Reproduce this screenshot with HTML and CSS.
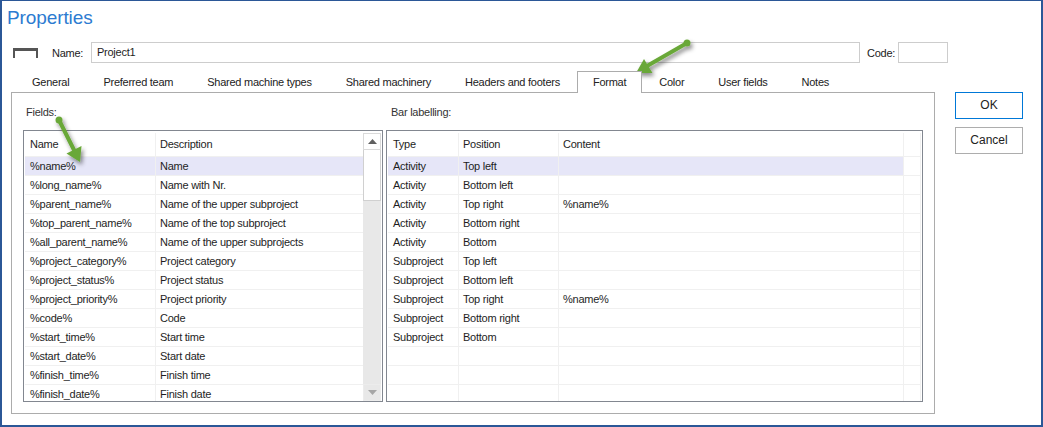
FILE: index.html
```html
<!DOCTYPE html>
<html>
<head>
<meta charset="utf-8">
<title>Properties</title>
<link rel="stylesheet" href="styles.css">
</head>
<body>
<div class="window">
  <div class="title">Properties</div>
  <div class="name-row">
    <svg class="name-icon" width="25" height="10" viewBox="0 0 25 10">
      <rect x="0" y="0" width="25" height="3" fill="#555"/>
      <rect x="0" y="0" width="2" height="10" fill="#555"/>
      <rect x="23" y="0" width="2" height="10" fill="#555"/>
    </svg>
    <span class="field-label">Name:</span>
    <div class="textbox name-box">Project1</div>
    <span class="field-label code-label">Code:</span>
    <div class="textbox code-box"></div>
  </div>
  <div class="main">
    <div class="tabs-area">
      <div class="tabs">
        <div class="tab">General</div>
        <div class="tab">Preferred team</div>
        <div class="tab">Shared machine types</div>
        <div class="tab">Shared machinery</div>
        <div class="tab">Headers and footers</div>
        <div class="tab active">Format</div>
        <div class="tab">Color</div>
        <div class="tab">User fields</div>
        <div class="tab">Notes</div>
      </div>
      <div class="panel">
        <div class="col col-left">
          <div class="group-label">Fields:</div>
          <div class="list">
            <div class="grid fields-grid">
              <div class="row head"><div class="cell">Name</div><div class="cell">Description</div></div>
              <div class="row sel"><div class="cell">%name%</div><div class="cell">Name</div></div>
              <div class="row"><div class="cell">%long_name%</div><div class="cell">Name with Nr.</div></div>
              <div class="row"><div class="cell">%parent_name%</div><div class="cell">Name of the upper subproject</div></div>
              <div class="row"><div class="cell">%top_parent_name%</div><div class="cell">Name of the top subproject</div></div>
              <div class="row"><div class="cell">%all_parent_name%</div><div class="cell">Name of the upper subprojects</div></div>
              <div class="row"><div class="cell">%project_category%</div><div class="cell">Project category</div></div>
              <div class="row"><div class="cell">%project_status%</div><div class="cell">Project status</div></div>
              <div class="row"><div class="cell">%project_priority%</div><div class="cell">Project priority</div></div>
              <div class="row"><div class="cell">%code%</div><div class="cell">Code</div></div>
              <div class="row"><div class="cell">%start_time%</div><div class="cell">Start time</div></div>
              <div class="row"><div class="cell">%start_date%</div><div class="cell">Start date</div></div>
              <div class="row"><div class="cell">%finish_time%</div><div class="cell">Finish time</div></div>
              <div class="row"><div class="cell">%finish_date%</div><div class="cell">Finish date</div></div>
            </div>
            <div class="scrollbar">
              <div class="sb-btn sb-up"><svg width="9" height="5" viewBox="0 0 9 5"><path d="M0 5 L4.5 0 L9 5 Z" fill="#606060"/></svg></div>
              <div class="sb-thumb"></div>
              <div class="sb-btn sb-down"><svg width="9" height="5" viewBox="0 0 9 5"><path d="M0 0 L4.5 5 L9 0 Z" fill="#a6a6a6"/></svg></div>
            </div>
          </div>
        </div>
        <div class="col col-right">
          <div class="group-label">Bar labelling:</div>
          <div class="list">
            <div class="grid label-grid">
              <div class="row head"><div class="cell">Type</div><div class="cell">Position</div><div class="cell">Content</div><div class="cell"></div></div>
              <div class="row sel"><div class="cell">Activity</div><div class="cell">Top left</div><div class="cell"></div><div class="cell"></div></div>
              <div class="row"><div class="cell">Activity</div><div class="cell">Bottom left</div><div class="cell"></div><div class="cell"></div></div>
              <div class="row"><div class="cell">Activity</div><div class="cell">Top right</div><div class="cell">%name%</div><div class="cell"></div></div>
              <div class="row"><div class="cell">Activity</div><div class="cell">Bottom right</div><div class="cell"></div><div class="cell"></div></div>
              <div class="row"><div class="cell">Activity</div><div class="cell">Bottom</div><div class="cell"></div><div class="cell"></div></div>
              <div class="row"><div class="cell">Subproject</div><div class="cell">Top left</div><div class="cell"></div><div class="cell"></div></div>
              <div class="row"><div class="cell">Subproject</div><div class="cell">Bottom left</div><div class="cell"></div><div class="cell"></div></div>
              <div class="row"><div class="cell">Subproject</div><div class="cell">Top right</div><div class="cell">%name%</div><div class="cell"></div></div>
              <div class="row"><div class="cell">Subproject</div><div class="cell">Bottom right</div><div class="cell"></div><div class="cell"></div></div>
              <div class="row"><div class="cell">Subproject</div><div class="cell">Bottom</div><div class="cell"></div><div class="cell"></div></div>
              <div class="row"><div class="cell"></div><div class="cell"></div><div class="cell"></div><div class="cell"></div></div>
              <div class="row"><div class="cell"></div><div class="cell"></div><div class="cell"></div><div class="cell"></div></div>
              <div class="row"><div class="cell"></div><div class="cell"></div><div class="cell"></div><div class="cell"></div></div>
            </div>
          </div>
        </div>
      </div>
    </div>
    <div class="buttons">
      <div class="btn default">OK</div>
      <div class="btn">Cancel</div>
    </div>
  </div>
</div>
<svg class="annotations" width="1043" height="427" viewBox="0 0 1043 427">
  <defs>
    <filter id="shadow" x="-50%" y="-50%" width="200%" height="200%">
      <feDropShadow dx="2" dy="3" stdDeviation="2" flood-color="#000" flood-opacity="0.45"/>
    </filter>
  </defs>
  <g filter="url(#shadow)" fill="#69a838" stroke="#69a838">
    <line x1="687" y1="43" x2="647" y2="66" stroke-width="4" stroke-linecap="round"/>
    <circle cx="687" cy="43" r="3.5" stroke="none"/>
    <path d="M636 73 L644 59 L652.5 73 Z" stroke="none"/>
  </g>
  <g filter="url(#shadow)" fill="#69a838" stroke="#69a838">
    <line x1="59" y1="120" x2="74" y2="150" stroke-width="4" stroke-linecap="round"/>
    <circle cx="59" cy="120" r="3.5" stroke="none"/>
    <path d="M80 162 L66.5 153.5 L81.5 146 Z" stroke="none"/>
  </g>
</svg>
</body>
</html>
```
FILE: styles.css
```css
* {
  box-sizing: border-box;
}

body {
  margin: 0;
  background: #ffffff;
  font-family: "Liberation Sans", Arial, sans-serif;
  font-size: 11px;
  letter-spacing: -0.25px;
  color: #1e1e1e;
}

.window {
  position: relative;
  width: 1043px;
  height: 427px;
  border: 2px solid #2b5797;
  border-top-width: 1px;
  overflow: hidden;
}

.title {
  margin: 5px 0 0 5px;
  height: 24px;
  line-height: 24px;
  font-size: 19px;
  letter-spacing: -0.1px;
  color: #2d7bd1;
}

.name-row {
  display: flex;
  align-items: center;
  height: 21px;
  margin-top: 12px;
  padding-left: 11px;
}

.name-icon {
  display: block;
  margin-right: 14px;
}

.field-label {
  width: 39px;
  color: #222;
}

.code-label {
  width: 31px;
  margin-left: 7px;
}

.textbox {
  height: 21px;
  border: 1px solid #cdcdcd;
  padding-left: 5px;
  line-height: 19px;
}

.name-box {
  width: 769px;
}

.code-box {
  width: 50px;
}

.main {
  display: flex;
  margin-top: 8px;
}

.tabs-area {
  margin-left: 9px;
  width: 924px;
}

.tabs {
  display: flex;
  align-items: flex-start;
  height: 21px;
  padding-left: 4px;
}

.tab {
  height: 22px;
  line-height: 22px;
  padding: 0 17px;
  white-space: nowrap;
  color: #222;
}

.tab.active {
  position: relative;
  z-index: 1;
  background: #ffffff;
  border: 1px solid #acacac;
  border-bottom: none;
  padding: 0 15px;
  line-height: 21px;
}

.panel {
  position: relative;
  display: flex;
  gap: 3px;
  height: 322px;
  border: 1px solid #acacac;
  padding: 11px 11px 0;
}

.col-left {
  width: 360px;
}

.col-right {
  width: 537px;
}

.group-label {
  height: 16px;
  line-height: 16px;
  margin: 0 0 10px 3px;
  color: #333;
}

.col-right .group-label {
  margin-left: 5px;
}

.list {
  display: flex;
  height: 272px;
  border: 1px solid #828790;
  padding: 1px 1px 0 1px;
  overflow: hidden;
}

.grid {
  flex: 1;
  overflow: hidden;
}

.row {
  display: grid;
  height: 19px;
}

.fields-grid .row {
  grid-template-columns: 131px 207px;
}

.label-grid .row {
  grid-template-columns: 71px 100px 345px 17px;
}

.row.head {
  height: 24px;
  margin-top: 1px;
}

.cell {
  border-right: 1px solid #f0f0f0;
  border-bottom: 1px solid #f0f0f0;
  padding-left: 4px;
  line-height: 18px;
  white-space: nowrap;
  overflow: hidden;
}

.cell:first-child {
  padding-left: 5px;
}

.fields-grid .cell:last-child {
  border-right: none;
}

.row.head .cell {
  line-height: 23px;
}

.row.sel .cell {
  background: #e6e6f8;
}

.label-grid .row.sel .cell:last-child {
  background: #ffffff;
}

.scrollbar {
  display: flex;
  flex-direction: column;
  width: 18px;
  margin-top: 1px;
  background: #e8e8e8;
}

.sb-btn {
  display: flex;
  align-items: center;
  justify-content: center;
  height: 17px;
}

.sb-up {
  background: #ffffff;
  border: 1px solid #dadada;
}

.sb-thumb {
  height: 51px;
  background: #ffffff;
  border: 1px solid #d0d0d0;
  border-top: none;
}

.sb-down {
  margin-top: auto;
  border: 1px solid #ececec;
}

.buttons {
  display: flex;
  flex-direction: column;
  gap: 8px;
  margin-left: 20px;
  padding-top: 21px;
}

.btn {
  width: 68px;
  height: 27px;
  border: 1px solid #adadad;
  background: #ffffff;
  text-align: center;
  line-height: 25px;
  font-size: 12px;
  letter-spacing: 0;
  color: #222;
}

.btn.default {
  border-color: #0078d7;
}

.annotations {
  position: absolute;
  top: 0;
  left: 0;
  pointer-events: none;
}
```
